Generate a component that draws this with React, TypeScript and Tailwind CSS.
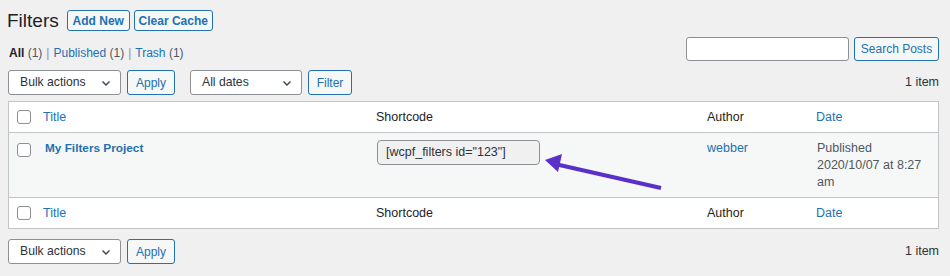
import React from 'react';

const font = { fontFamily: '"Liberation Sans", Arial, sans-serif' };

const Checkbox: React.FC<{ className?: string }> = ({ className = '' }) => (
  <span
    className={`block w-[14px] h-[14px] rounded-[3px] border border-[#8c8f94] bg-white ${className}`}
  />
);

const Chevron = () => (
  <svg width="12" height="12" viewBox="0 0 12 12" className="text-[#3c434a]">
    <path d="M2.5 4.5 6 8l3.5-3.5" fill="none" stroke="currentColor" strokeWidth="1.4" />
  </svg>
);

const Select: React.FC<{ label: string; width: string }> = ({ label, width }) => (
  <div
    className={`${width} h-[25px] flex items-center justify-between pl-[11px] pr-[8px] bg-white border border-[#8c8f94] rounded-[3px] text-[12.2px] text-[#2c3338]`}
  >
    <span>{label}</span>
    <Chevron />
  </div>
);

const Button: React.FC<{ label: string; width: string }> = ({ label, width }) => (
  <div
    className={`${width} h-[25px] flex items-center justify-center whitespace-nowrap bg-[#f6f7f7] border border-[#2271b1] rounded-[3px] text-[12px] text-[#2271b1]`}
  >
    {label}
  </div>
);

const TableRow = () => (
  <div className="grid grid-cols-[34px_333px_331px_109px_1fr] h-[30px] items-center text-[12.5px]">
    <div className="pl-[8px]">
      <Checkbox />
    </div>
    <div className="text-[#2271b1]">Title</div>
    <div className="text-[#1d2327]">Shortcode</div>
    <div className="text-[#1d2327]">Author</div>
    <div className="text-[#2271b1]">Date</div>
  </div>
);

const Tablenav: React.FC<{ filters?: boolean }> = ({ filters }) => (
  <div className="flex items-center h-[25px]">
    <Select label="Bulk actions" width="w-[113px]" />
    <div className="ml-[6px]">
      <Button label="Apply" width="w-[48px]" />
    </div>
    {filters && (
      <>
        <div className="ml-[15px]">
          <Select label="All dates" width="w-[112px]" />
        </div>
        <div className="ml-[6px]">
          <Button label="Filter" width="w-[44px]" />
        </div>
      </>
    )}
    <div className="ml-auto text-[12.5px] text-[#2c3338]">1 item</div>
  </div>
);

export default function App() {
  return (
    <div style={font} className="relative bg-[#f0f0f1] min-h-[276px] pt-[10px] pl-[8px] pr-[11px]">
      <div className="flex items-center h-[21px]">
        <h1 className="-ml-[1px] text-[19px] leading-[21px] text-[#1d2327] mr-[8px]">Filters</h1>
        <div className="h-[21px] w-[63px] flex items-center justify-center whitespace-nowrap border border-[#2271b1] rounded-[3px] bg-[#f6f7f7] text-[12px] font-bold text-[#2271b1]">
          Add New
        </div>
        <div className="ml-[4px] h-[21px] w-[79px] flex items-center justify-center whitespace-nowrap border border-[#2271b1] rounded-[3px] bg-[#f6f7f7] text-[12px] font-bold text-[#2271b1]">
          Clear Cache
        </div>
      </div>

      <div className="flex justify-between items-end mt-[6px] h-[24px]">
        <div className="text-[12px] leading-[15px] text-[#50575e] flex gap-[4px] pl-[1px]">
          <span>
            <span className="font-bold text-[#1d2327]">All</span> (1)
          </span>
          <span className="text-[#8c8f94]">|</span>
          <span>
            <span className="text-[#2271b1]">Published</span> (1)
          </span>
          <span className="text-[#8c8f94]">|</span>
          <span>
            <span className="text-[#2271b1]">Trash</span> (1)
          </span>
        </div>
        <div className="flex items-center gap-[5px]">
          <div className="w-[163px] h-[24px] bg-white border border-[#8c8f94] rounded-[3px]" />
          <Button label="Search Posts" width="w-[85px] !h-[24px]" />
        </div>
      </div>

      <div className="mt-[9px]">
        <Tablenav filters />
      </div>

      <div className="mt-[6px] bg-white border border-[#c3c4c7]">
        <div className="border-b border-[#c3c4c7]">
          <TableRow />
        </div>
        <div className="grid grid-cols-[34px_333px_331px_109px_1fr] bg-[#f6f7f7] border-b border-[#c3c4c7] pt-[7px] pb-[6px] text-[12.5px] leading-[17px]">
          <div className="pl-[8px] pt-[3px]">
            <Checkbox />
          </div>
          <div className="pl-[2px] font-bold text-[11.8px] text-[#2271b1]">My Filters Project</div>
          <div className="pl-[1px]">
            <div className="w-[163px] h-[25px] flex items-center pl-[8px] bg-[#f0f0f1] border border-[#8c8f94] rounded-[4px] text-[12.5px] text-[#2c3338]">
              [wcpf_filters id="123"]
            </div>
          </div>
          <div className="text-[#2271b1]">webber</div>
          <div className="pl-[1px] pr-[12px] text-[#50575e]">Published 2020/10/07 at 8:27 am</div>
        </div>
        <TableRow />
      </div>

      <div className="mt-[10px]">
        <Tablenav />
      </div>

      <svg
        className="absolute left-[540px] top-[148px]"
        width="130"
        height="46"
        viewBox="540 148 130 46"
      >
        <line x1="555" y1="164" x2="661" y2="188" stroke="#5a30c8" strokeWidth="4" />
        <polygon points="545,160 562,154 558,172" fill="#5a30c8" />
      </svg>
    </div>
  );
}
